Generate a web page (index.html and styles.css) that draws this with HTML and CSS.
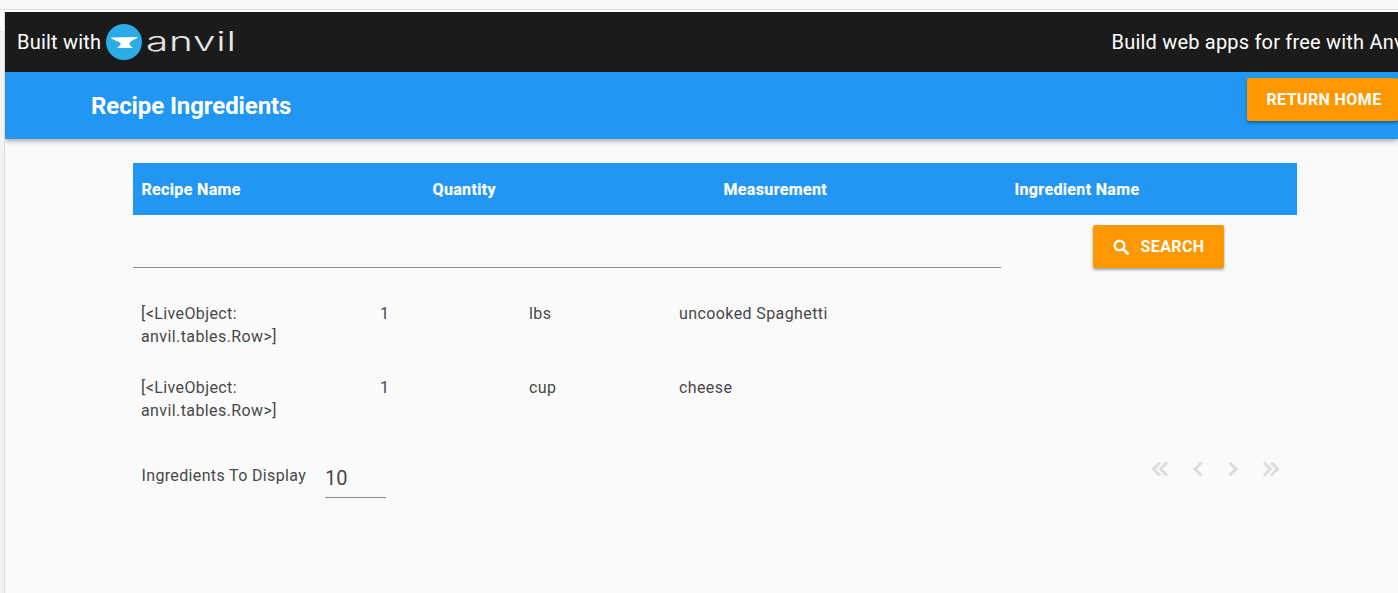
FILE: index.html
```html
<!DOCTYPE html>
<html lang="en">
<head>
<meta charset="utf-8">
<title>Recipe Ingredients</title>
<link rel="stylesheet" href="styles.css">
</head>
<body>
<div class="chrome-top"></div>
<div class="shell">
<div class="side"></div>
<div class="app">
  <div class="banner">
    <div class="built">
      <span class="built-text">Built with</span>
      <svg class="logo-mark" viewBox="0 0 36 36" aria-hidden="true">
        <circle cx="18" cy="18" r="18" fill="#2bace8"/>
        <path d="M4.500 13.500L32 13C28 16.500 24.500 16.500 23.500 19C23.500 21 25 22.500 27 24L11 24C13 22.500 15 21 14.500 19C12 17 7.500 16.500 4.500 13.500Z" fill="#fff"/>
      </svg>
      <span class="wordmark">anvil</span>
    </div>
    <div class="promo">Build web apps for free with Anvil</div>
  </div>
  <header class="titlebar">
    <h1 class="title">Recipe Ingredients</h1>
    <button class="btn btn-home">RETURN HOME</button>
  </header>
  <main class="content">
    <div class="table-head">
      <div>Recipe Name</div>
      <div>Quantity</div>
      <div>Measurement</div>
      <div>Ingredient Name</div>
    </div>
    <div class="search-row">
      <div class="search-input"></div>
      <div class="search-side">
        <button class="btn btn-search">
          <svg class="search-icon" viewBox="0 0 16 16" aria-hidden="true">
            <circle cx="6.500" cy="6.500" r="4.800" fill="none" stroke="#fff" stroke-width="2.400"/>
            <path d="M10 10l4.500 4.500" stroke="#fff" stroke-width="2.800" stroke-linecap="round"/>
          </svg>
          SEARCH
        </button>
      </div>
    </div>
    <div class="rows">
      <div class="row">
        <div class="c-recipe">[&lt;LiveObject: anvil.tables.Row&gt;]</div>
        <div class="c-qty">1</div>
        <div class="c-meas">lbs</div>
        <div>uncooked Spaghetti</div>
      </div>
      <div class="row">
        <div class="c-recipe">[&lt;LiveObject: anvil.tables.Row&gt;]</div>
        <div class="c-qty">1</div>
        <div class="c-meas">cup</div>
        <div>cheese</div>
      </div>
    </div>
    <div class="footer-row">
      <div class="display">
        <span class="display-label">Ingredients To Display</span>
        <span class="display-input">10</span>
      </div>
      <div class="pager">
        <svg viewBox="0 0 18 16" aria-hidden="true"><path d="M9 1.500L2.500 8l6.500 6.500M16 1.500L9.500 8l6.500 6.500"/></svg>
        <svg viewBox="0 0 12 16" aria-hidden="true"><path d="M9.500 1.500L3 8l6.500 6.500"/></svg>
        <svg viewBox="0 0 12 16" aria-hidden="true"><path d="M2.500 1.500L9 8l-6.500 6.500"/></svg>
        <svg viewBox="0 0 18 16" aria-hidden="true"><path d="M2 1.500L8.500 8 2 14.500M9 1.500L15.500 8 9 14.500"/></svg>
      </div>
    </div>
  </main>
</div>
</div>
</body>
</html>
```
FILE: styles.css
```css
* { box-sizing: border-box; }
html, body { margin: 0; height: 100%; overflow: hidden; }
body {
  font-family: Roboto, "Noto Sans", sans-serif;
  background: #fff;
  width: 1398px;
  height: 593px;
}
.chrome-top {
  height: 12px;
  background: #fff;
  border-top: 9px solid #f8f8f8;
  box-shadow: inset 0 1px 0 #e2e2e2;
}
.shell { display: flex; height: 581px; }
.side {
  width: 4px;
  flex: none;
  margin-top: 19px;
  background: #f3f3f3;
  border-top: 1px solid #dddddd;
  border-top-right-radius: 3px;
}
.app {
  flex: 1;
  min-width: 0;
  border-left: 1px solid #dcdcdc;
  background: #fafafa;
  overflow: hidden;
}
.banner {
  height: 60px;
  background: #1b1b1b;
  color: #fff;
  display: flex;
  align-items: center;
  justify-content: space-between;
  overflow: hidden;
  white-space: nowrap;
}
.built { display: flex; align-items: center; padding-left: 12px; }
.built-text { font-size: 20px; letter-spacing: .2px; }
.logo-mark { width: 36px; height: 36px; margin-left: 5px; flex: none; }
.wordmark {
  display: inline-block;
  font-family: Inter, sans-serif;
  font-weight: 300;
  font-size: 27px;
  letter-spacing: .5px;
  line-height: 36px;
  margin-left: 4px;
  color: #e6e6e6;
  transform: scaleX(1.5);
  transform-origin: left center;
}
.promo { font-size: 20px; letter-spacing: .2px; flex: none; margin-right: -16px; }
.titlebar {
  height: 67px;
  background: #2196f3;
  display: flex;
  justify-content: space-between;
  align-items: flex-start;
  padding: 6px 0 0 86px;
  box-shadow: 0 2px 5px rgba(0,0,0,.35);
  position: relative;
}
.title {
  margin: 0;
  font-size: 24px;
  font-weight: 700;
  color: #fff;
  line-height: 56px;
  letter-spacing: -.1px;
}
.btn {
  border: 0;
  background: #ff9800;
  color: #fff;
  font-family: Roboto, sans-serif;
  font-weight: 700;
  font-size: 16px;
  letter-spacing: .4px;
  border-radius: 2px;
  box-shadow: 0 2px 3px rgba(0,0,0,.35);
  padding: 0;
}
.btn-home { width: 151px; height: 43px; padding-left: 3px; }
.content { padding: 24px 0 0 128px; width: 1292px; }
.table-head {
  height: 52px;
  background: #2196f3;
  color: #fff;
  font-size: 16px;
  font-weight: 700;
  letter-spacing: .35px;
  -webkit-text-stroke: .2px #fff;
  display: grid;
  grid-template-columns: repeat(4, 291px);
  align-items: center;
  padding-left: 8.500px;
}
.search-row { display: flex; height: 53px; }
.search-input { width: 868px; border-bottom: 1px solid #8a8a8a; }
.search-side { flex: 1; padding: 10px 0 0 92px; }
.btn-search {
  width: 131px;
  height: 43px;
  display: flex;
  align-items: center;
  justify-content: center;
  gap: 11px;
  padding-left: 1px;
}
.search-icon { width: 16px; height: 16px; flex: none; }
.rows { padding-top: 34px; }
.row {
  display: grid;
  grid-template-columns: 239px 149px 150px 1fr;
  padding-left: 8px;
  height: 74px;
  font-size: 16px;
  line-height: 23px;
  letter-spacing: .4px;
  color: #484848;
}
.c-recipe { width: 150px; }
.footer-row {
  display: flex;
  justify-content: space-between;
  align-items: flex-start;
  padding-top: 9px;
}
.display { display: flex; align-items: flex-start; padding: 5px 0 0 8.500px; }
.display-label { font-size: 16px; line-height: 24px; letter-spacing: .35px; color: #484848; width: 183.500px; }
.display-input {
  width: 61px;
  height: 34px;
  font-size: 20px;
  line-height: 28px;
  color: #484848;
  border-bottom: 1px solid #8a8a8a;
}
.pager {
  display: flex;
  align-items: center;
  gap: 23px;
  padding-right: 17px;
  height: 20px;
}
.pager svg { height: 16px; display: block; flex: none; }
.pager svg:nth-child(1), .pager svg:nth-child(4) { width: 18px; }
.pager svg:nth-child(2), .pager svg:nth-child(3) { width: 12px; }
.pager path { fill: none; stroke: #dcdcdc; stroke-width: 3; }
```
